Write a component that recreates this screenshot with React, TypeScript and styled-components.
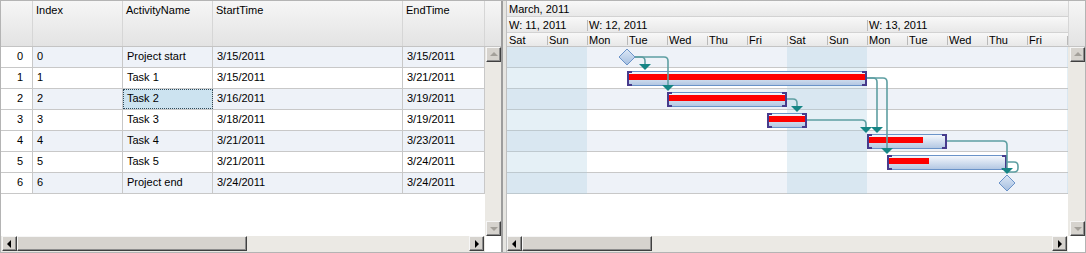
import React from 'react';
import styled, { createGlobalStyle } from 'styled-components';

const Global = createGlobalStyle`
  html, body { margin: 0; padding: 0; background: #fff; }
  body { font-family: "Liberation Sans", Arial, sans-serif; font-size: 11px; color: #000; }
  * { box-sizing: border-box; }
`;

const Frame = styled.div`
  width: 1086px;
  height: 253px;
  border: 1px solid #b4b4b4;
  display: flex;
  overflow: hidden;
  background: #fff;
`;

/* ---------- shared scrollbar parts ---------- */
const Track = styled.div`
  background: #ebe9e4;
`;

const VScroll = styled(Track)<{ $w: number }>`
  width: ${(p) => p.$w}px;
  flex: none;
  display: flex;
  flex-direction: column;
  justify-content: space-between;
  align-items: flex-end;
`;

const HScroll = styled(Track)<{ $pl: number }>`
  flex: 1;
  display: flex;
  align-items: flex-start;
  padding-left: ${(p) => p.$pl}px;
  padding-right: 1px;
`;

const SButton = styled.div`
  width: 15px;
  height: 15px;
  flex: none;
  background: #d6d3ce;
  border: 1px solid;
  border-color: #f6f6f6 #404040 #404040 #f6f6f6;
  box-shadow: inset -1px -1px #8c8c8c;
  display: flex;
  align-items: center;
  justify-content: center;
`;

const Thumb = styled.div<{ $w: number }>`
  width: ${(p) => p.$w}px;
  height: 15px;
  flex: none;
  background: #d6d3ce;
  border: 1px solid;
  border-color: #f6f6f6 #404040 #404040 #f6f6f6;
  box-shadow: inset -1px -1px #8c8c8c;
`;

const Spacer = styled.div`
  flex: 1;
`;

const Arrow = styled.span<{ $dir: 'up' | 'down' | 'left' | 'right'; $off?: boolean }>`
  width: 0;
  height: 0;
  display: block;
  ${(p) => {
    const c = p.$off ? '#a3a09a' : '#000';
    switch (p.$dir) {
      case 'up':
        return `border-left:4px solid transparent;border-right:4px solid transparent;border-bottom:4px solid ${c};margin-top:-1px;`;
      case 'down':
        return `border-left:4px solid transparent;border-right:4px solid transparent;border-top:4px solid ${c};margin-top:1px;`;
      case 'left':
        return `border-top:4px solid transparent;border-bottom:4px solid transparent;border-right:4px solid ${c};margin-left:-1px;`;
      default:
        return `border-top:4px solid transparent;border-bottom:4px solid transparent;border-left:4px solid ${c};margin-left:1px;`;
    }
  }}
`;

const Corner = styled.div<{ $w: number }>`
  width: ${(p) => p.$w}px;
  flex: none;
  background: #fff;
`;

const Footer = styled.div`
  height: 16px;
  flex: none;
  display: flex;
`;

/* ---------- grid (left) ---------- */
const GridPanel = styled.div`
  width: 500px;
  flex: none;
  display: flex;
  flex-direction: column;
`;

const GridHeader = styled.div`
  height: 46px;
  flex: none;
  display: flex;
  border-bottom: 1px solid #c4c4c4;
  background: linear-gradient(#f6f6f6, #e3e3e3);
`;

const HeadCell = styled.div<{ $w: number }>`
  width: ${(p) => p.$w}px;
  flex: none;
  border-right: 1px solid #d6d6d6;
  padding: 3px 3px;
  white-space: nowrap;
  overflow: hidden;
`;

const HeadFill = styled.div`
  flex: 1;
`;

const Body = styled.div`
  flex: 1;
  display: flex;
  min-height: 0;
`;

const Rows = styled.div`
  flex: 1;
  display: flex;
  flex-direction: column;
  background: #fff;
  overflow: hidden;
`;

const GridRow = styled.div<{ $alt: boolean }>`
  height: 21px;
  flex: none;
  display: flex;
  border-bottom: 1px solid #c8c8c8;
  background: ${(p) => (p.$alt ? '#eef2f8' : '#fff')};
`;

const RowHead = styled.div`
  width: 32px;
  flex: none;
  background: #fff;
  border-right: 1px solid #c8c8c8;
  text-align: right;
  padding-right: 9px;
  line-height: 19px;
`;

const Cell = styled.div<{ $w: number; $sel?: boolean }>`
  width: ${(p) => p.$w}px;
  flex: none;
  border-right: 1px solid #c8c8c8;
  padding-left: 4px;
  line-height: 19px;
  white-space: nowrap;
  overflow: hidden;
  ${(p) => (p.$sel ? 'background:#cce3f0; outline:1px dotted #2e4a5a; outline-offset:-1px;' : '')}
`;

/* ---------- splitter ---------- */
const Splitter = styled.div`
  width: 5px;
  flex: none;
  background: #e6e5e1;
  border-left: 2px solid #9d9d9d;
`;

/* ---------- gantt (right) ---------- */
const GanttPanel = styled.div`
  flex: 1;
  display: flex;
  flex-direction: column;
  border-left: 1px solid #c0c0c0;
  min-width: 0;
`;

const GanttHeader = styled.div`
  height: 46px;
  flex: none;
  display: flex;
  border-bottom: 1px solid #c4c4c4;
`;

const Timeline = styled.div`
  width: 561px;
  flex: none;
  display: flex;
  flex-direction: column;
  overflow: hidden;
`;

const HeaderSpacer = styled.div`
  flex: 1;
  border-left: 1px solid #d6d6d6;
  background: linear-gradient(#f6f6f6, #e3e3e3);
`;

const TimeRow = styled.div<{ $h: number; $last?: boolean }>`
  height: ${(p) => p.$h}px;
  flex: none;
  display: flex;
  background: linear-gradient(#f8f8f8, #e8e8e8);
  ${(p) => (p.$last ? 'padding-top: 1px;' : 'border-bottom: 1px solid #d2d2d2;')}
  white-space: nowrap;
`;

const TimeCell = styled.div<{ $w: number; $tick?: number }>`
  width: ${(p) => p.$w}px;
  flex: none;
  position: relative;
  padding-left: 2px;
  display: flex;
  align-items: center;
  overflow: hidden;
  ${(p) =>
    p.$tick
      ? `&::before{content:'';position:absolute;left:0;bottom:1px;height:${p.$tick}px;border-left:1px solid #b9b9b9;}`
      : ''}
`;

const Chart = styled.div`
  width: 561px;
  flex: none;
  position: relative;
  display: flex;
  flex-direction: column;
  background: #fff;
  overflow: hidden;
`;

const ChartRow = styled.div<{ $alt: boolean }>`
  height: 21px;
  flex: none;
  border-bottom: 1px solid #c8c8c8;
  background: ${(p) => (p.$alt ? '#eef2f8' : '#fff')};
`;

const ChartSvg = styled.svg`
  position: absolute;
  left: 0;
  top: 0;
  pointer-events: none;
`;

/* ---------- data ---------- */
const tasks = [
  { name: 'Project start', start: '3/15/2011', end: '3/15/2011' },
  { name: 'Task 1', start: '3/15/2011', end: '3/21/2011' },
  { name: 'Task 2', start: '3/16/2011', end: '3/19/2011' },
  { name: 'Task 3', start: '3/18/2011', end: '3/19/2011' },
  { name: 'Task 4', start: '3/21/2011', end: '3/23/2011' },
  { name: 'Task 5', start: '3/21/2011', end: '3/24/2011' },
  { name: 'Project end', start: '3/24/2011', end: '3/24/2011' },
];

const days = ['Sat', 'Sun', 'Mon', 'Tue', 'Wed', 'Thu', 'Fri', 'Sat', 'Sun', 'Mon', 'Tue', 'Wed', 'Thu', 'Fri', ''];

const ORIGIN_X = 507;
const ORIGIN_Y = 47;
const rowTop = (i: number) => ORIGIN_Y + 21 * i;

const BRACKET = '#463b8c';

function Bar({ x1, x2, row, progress }: { x1: number; x2: number; row: number; progress: number }) {
  const top = rowTop(row);
  const y1 = top + 3;
  const h = 15;
  const y2 = y1 + h;
  return (
    <g>
      <rect x={x1 + 0.5} y={y1 + 0.5} width={x2 - x1 - 1} height={h - 1} fill="url(#barGrad)" stroke="#6a93c8" />
      <rect x={x1 + 1} y={top + 6} width={progress - x1 - 1} height={6} fill="#ff0000" />
      <rect x={x1} y={y1} width={2} height={h} fill={BRACKET} />
      <rect x={x1} y={y1} width={5} height={2} fill={BRACKET} />
      <rect x={x1} y={y2 - 2} width={5} height={2} fill={BRACKET} />
      <rect x={x2 - 2} y={y1} width={2} height={h} fill={BRACKET} />
      <rect x={x2 - 5} y={y1} width={5} height={2} fill={BRACKET} />
      <rect x={x2 - 5} y={y2 - 2} width={5} height={2} fill={BRACKET} />
    </g>
  );
}

function Milestone({ cx, cy }: { cx: number; cy: number }) {
  return (
    <polygon
      points={`${cx},${cy - 8} ${cx + 8},${cy} ${cx},${cy + 8} ${cx - 8},${cy}`}
      fill="url(#msGrad)"
      stroke="#6b93c8"
      strokeWidth={1}
    />
  );
}

function Head({ x, tip }: { x: number; tip: number }) {
  return <polygon points={`${x - 6},${tip - 6} ${x + 6},${tip - 6} ${x},${tip}`} fill="#168585" />;
}

const links = [
  'M635 57 H641 Q645 57 645 61 V65',
  'M635 57 H664 Q668 57 668 61 V86',
  'M787 99 H793 Q797 99 797 103 V107',
  'M867 78 H873 Q877 78 877 82 V129',
  'M867 78 H883 Q887 78 887 82 V150',
  'M807 120 H862 Q866 120 866 124 V129',
  'M947 141 H1003 Q1007 141 1007 145 V170',
  'M1007 162 H1014 Q1018 162 1018 166 V168 Q1018 172 1014 172 H1008',
];

const heads = [
  { x: 645, tip: 70 },
  { x: 668, tip: 91 },
  { x: 797, tip: 112 },
  { x: 866, tip: 133 },
  { x: 877, tip: 133 },
  { x: 887, tip: 154 },
  { x: 1007, tip: 174 },
];

export default function App() {
  return (
    <>
      <Global />
      <Frame>
        <GridPanel>
          <GridHeader>
            <HeadCell $w={32} />
            <HeadCell $w={90}>Index</HeadCell>
            <HeadCell $w={90}>ActivityName</HeadCell>
            <HeadCell $w={190}>StartTime</HeadCell>
            <HeadCell $w={82}>EndTime</HeadCell>
            <HeadFill />
          </GridHeader>
          <Body>
            <Rows>
              {tasks.map((t, i) => (
                <GridRow key={i} $alt={i % 2 === 0}>
                  <RowHead>{i}</RowHead>
                  <Cell $w={90}>{i}</Cell>
                  <Cell $w={90} $sel={i === 2}>
                    {t.name}
                  </Cell>
                  <Cell $w={190}>{t.start}</Cell>
                  <Cell $w={82}>{t.end}</Cell>
                </GridRow>
              ))}
            </Rows>
            <VScroll $w={16}>
              <SButton>
                <Arrow $dir="up" $off />
              </SButton>
              <SButton>
                <Arrow $dir="down" $off />
              </SButton>
            </VScroll>
          </Body>
          <Footer>
            <HScroll $pl={1}>
              <SButton>
                <Arrow $dir="left" />
              </SButton>
              <Thumb $w={230} />
              <Spacer />
              <SButton>
                <Arrow $dir="right" />
              </SButton>
            </HScroll>
            <Corner $w={16} />
          </Footer>
        </GridPanel>

        <Splitter />

        <GanttPanel>
          <GanttHeader>
            <Timeline>
              <TimeRow $h={16}>
                <TimeCell $w={561}>March, 2011</TimeCell>
              </TimeRow>
              <TimeRow $h={16}>
                <TimeCell $w={80}>W: 11, 2011</TimeCell>
                <TimeCell $w={280} $tick={11}>
                  W: 12, 2011
                </TimeCell>
                <TimeCell $w={280} $tick={11}>
                  W: 13, 2011
                </TimeCell>
              </TimeRow>
              <TimeRow $h={13} $last>
                {days.map((d, i) => (
                  <TimeCell key={i} $w={40} $tick={i === 0 ? 0 : 9}>
                    {d}
                  </TimeCell>
                ))}
              </TimeRow>
            </Timeline>
            <HeaderSpacer />
          </GanttHeader>
          <Body>
            <Chart>
              {tasks.map((_, i) => (
                <ChartRow key={i} $alt={i % 2 === 0} />
              ))}
              <ChartSvg width={561} height={147} viewBox="0 0 561 147">
                <defs>
                  <linearGradient id="barGrad" x1="0" y1="0" x2="0" y2="1">
                    <stop offset="0" stopColor="#f6f9fd" />
                    <stop offset="1" stopColor="#b1c6e2" />
                  </linearGradient>
                  <linearGradient id="msGrad" x1="0" y1="0" x2="0" y2="1">
                    <stop offset="0" stopColor="#dde8f6" />
                    <stop offset="1" stopColor="#a4bedf" />
                  </linearGradient>
                </defs>
                <g fill="rgba(170,205,226,0.3)">
                  <rect x={0} y={0} width={80} height={147} />
                  <rect x={280} y={0} width={80} height={147} />
                  <rect x={560} y={0} width={80} height={147} />
                </g>
                <g transform={`translate(${-ORIGIN_X} ${-ORIGIN_Y})`}>
                  <Bar x1={627} x2={867} row={1} progress={865} />
                  <Bar x1={667} x2={787} row={2} progress={785} />
                  <Bar x1={767} x2={807} row={3} progress={805} />
                  <Bar x1={867} x2={947} row={4} progress={923} />
                  <Bar x1={887} x2={1007} row={5} progress={929} />
                  <g fill="none" stroke="#5e9fa2" strokeWidth={1.6}>
                    {links.map((d, i) => (
                      <path key={i} d={d} />
                    ))}
                  </g>
                  {heads.map((h, i) => (
                    <Head key={i} x={h.x} tip={h.tip} />
                  ))}
                  <Milestone cx={627} cy={57} />
                  <Milestone cx={1007} cy={183} />
                </g>
              </ChartSvg>
            </Chart>
            <VScroll $w={17}>
              <SButton>
                <Arrow $dir="up" $off />
              </SButton>
              <SButton>
                <Arrow $dir="down" $off />
              </SButton>
            </VScroll>
          </Body>
          <Footer>
            <HScroll $pl={0}>
              <SButton>
                <Arrow $dir="left" />
              </SButton>
              <Thumb $w={130} />
              <Spacer />
              <SButton>
                <Arrow $dir="right" />
              </SButton>
            </HScroll>
            <Corner $w={17} />
          </Footer>
        </GanttPanel>
      </Frame>
    </>
  );
}
